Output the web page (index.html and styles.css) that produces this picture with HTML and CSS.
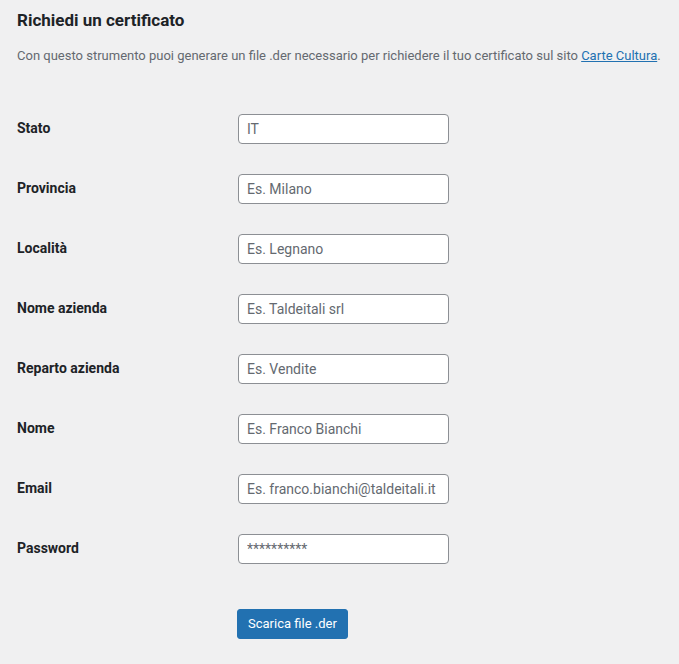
FILE: index.html
```html
<!DOCTYPE html>
<html lang="it">
<head>
<meta charset="utf-8">
<title>Richiedi un certificato</title>
<link rel="stylesheet" href="styles.css">
</head>
<body>
<div class="wrap">
  <h2 class="title">Richiedi un certificato</h2>
  <p class="description">Con questo strumento puoi generare un file .der necessario per richiedere il tuo certificato sul sito <a href="#">Carte Cultura</a>.</p>
  <form class="form-table">
    <div class="row"><label class="label" for="f1">Stato</label><div class="field"><input id="f1" type="text" placeholder="IT"></div></div>
    <div class="row"><label class="label" for="f2">Provincia</label><div class="field"><input id="f2" type="text" placeholder="Es. Milano"></div></div>
    <div class="row"><label class="label" for="f3">Località</label><div class="field"><input id="f3" type="text" placeholder="Es. Legnano"></div></div>
    <div class="row"><label class="label" for="f4">Nome azienda</label><div class="field"><input id="f4" type="text" placeholder="Es. Taldeitali srl"></div></div>
    <div class="row"><label class="label" for="f5">Reparto azienda</label><div class="field"><input id="f5" type="text" placeholder="Es. Vendite"></div></div>
    <div class="row"><label class="label" for="f6">Nome</label><div class="field"><input id="f6" type="text" placeholder="Es. Franco Bianchi"></div></div>
    <div class="row"><label class="label" for="f7">Email</label><div class="field"><input id="f7" type="text" placeholder="Es. franco.bianchi@taldeitali.it"></div></div>
    <div class="row"><label class="label" for="f8">Password</label><div class="field"><input id="f8" type="text" placeholder="**********"></div></div>
    <div class="submit"><button type="button" class="button-primary">Scarica file .der</button></div>
  </form>
</div>
</body>
</html>
```
FILE: styles.css
```css
html, body {
  margin: 0;
  padding: 0;
  background: #f0f0f1;
}
body {
  font-family: Roboto, "Liberation Sans", sans-serif;
  color: #1d2327;
  font-size: 13px;
  line-height: 1.4;
}
.wrap {
  padding: 9px 17px 20px 17px;
}
.title {
  margin: 0;
  font-size: 17px;
  font-weight: 700;
  line-height: 22px;
  color: #1d2327;
}
.description {
  margin: 15px 0 0 0;
  font-size: 13px;
  line-height: 20px;
  color: #646970;
}
.description a {
  color: #2271b1;
  text-decoration: underline;
}
.form-table {
  margin-top: 33px;
  display: flex;
  flex-direction: column;
}
.row {
  display: grid;
  grid-template-columns: 221px 211px;
  padding: 15px 0;
}
.label {
  padding-top: 5px;
  font-size: 14px;
  font-weight: 700;
  line-height: 18px;
  color: #1d2327;
}
.field input {
  box-sizing: border-box;
  width: 211px;
  height: 30px;
  margin: 0;
  padding: 0 8px;
  border: 1px solid #8c8f94;
  border-radius: 4px;
  background: #fff;
  font-family: Roboto, "Liberation Sans", sans-serif;
  font-size: 14px;
  color: #2c3338;
}
.field input::placeholder {
  color: #646970;
  opacity: 1;
}
.submit {
  padding-top: 30px;
  padding-left: 220px;
}
.button-primary {
  box-sizing: border-box;
  height: 30px;
  padding: 0 10px;
  border: 1px solid #2271b1;
  border-radius: 3px;
  background: #2271b1;
  color: #fff;
  font-family: Roboto, "Liberation Sans", sans-serif;
  font-size: 13px;
  line-height: 28px;
  cursor: pointer;
}
```
